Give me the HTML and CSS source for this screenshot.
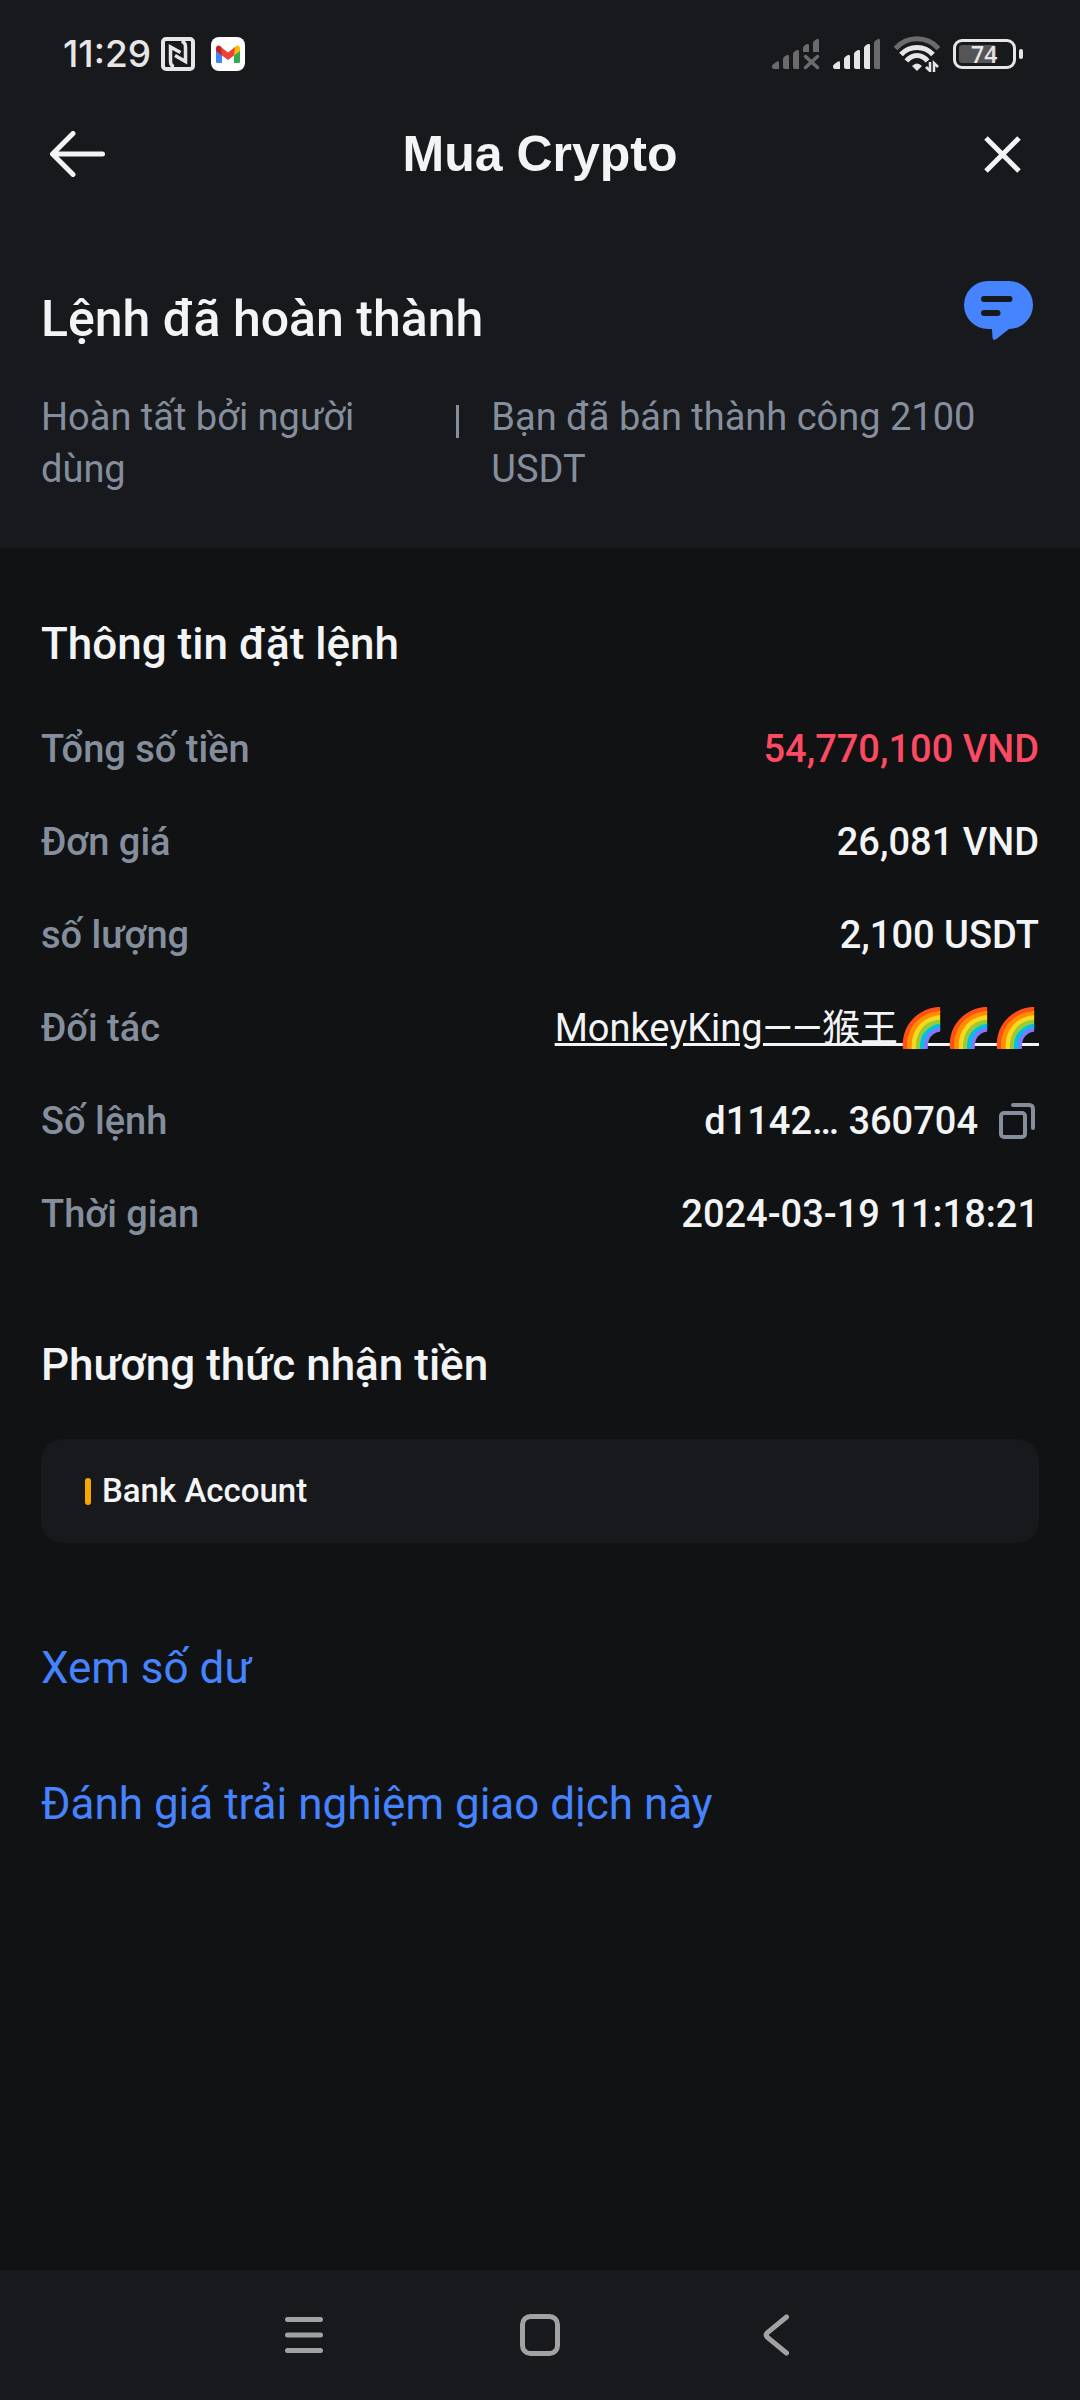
FILE: index.html
```html
<!DOCTYPE html>
<html lang="vi">
<head>
  <meta charset="UTF-8">
  <meta name="viewport" content="width=device-width, initial-scale=1">
  <title>Mua Crypto</title>
  <link rel="stylesheet" href="styles.css">
</head>
<body>

  <div class="status-bar">
    <div class="status-left">
      <span class="time">11:29</span>
      <svg class="nfc" width="34" height="34" viewBox="0 0 34 34" fill="none" stroke="#e6e6e6">
        <rect x="2" y="2" width="30" height="30" rx="3" stroke-width="4"/>
        <path d="M13 29.500C10 29 9.500 27 9.500 24V10L19.500 15.500" stroke-width="3.500"/>
        <path d="M20.500 4.500C24 5 24.500 7 24.500 10V24.500L14 18.500" stroke-width="3.500"/>
      </svg>
      <svg width="34" height="34" viewBox="0 0 34 34">
        <rect width="34" height="34" rx="8" fill="#fff"/>
        <path d="M5 12v12.500q0 1.500 1.500 1.500H11V15z" fill="#4285f4"/>
        <path d="M29 12v12.500q0 1.500-1.500 1.500H23V15z" fill="#34a853"/>
        <path d="M23 11.500l1.500-2.200C26.500 7.500 29 9 29 11.500V14l-6 4.500z" fill="#fbbc04"/>
        <path d="M11 11.500L9.500 9.300C7.500 7.500 5 9 5 11.500V14l6 4.500z" fill="#c5221f"/>
        <path d="M10 10l7 5.500L24 10l-1 8.500-6 4.500-6-4.500z" fill="#ea4335"/>
      </svg>
    </div>
    <div class="status-right">
      <svg width="48" height="32" viewBox="0 0 48 32" fill="#6b6b6d">
        <path d="M0 28q0-1.500 5-4.500q2-.8 2 1V31H2q-2 0-2-2z"/>
        <path d="M11 21q0-2 4-4q2-.5 2 1V31h-4q-2 0-2-2z"/>
        <path d="M21 16q0-2 4-4q2-.5 2 1V31h-4q-2 0-2-2z"/>
        <path d="M31 10q0-2 4-4q2-.5 2 1v7h-6z"/>
        <path d="M41 5q0-2 4-4q2-.5 2 1v12h-6z"/>
        <path d="M33.500 18.500l12 11m0-11l-12 11" fill="none" stroke="#6b6b6d" stroke-width="3.500" stroke-linecap="round"/>
      </svg>
      <svg width="48" height="32" viewBox="0 0 48 32" fill="#e6e6e6">
        <path d="M0 28q0-1.500 5-4.500q2-.8 2 1V31H2q-2 0-2-2z"/>
        <path d="M11 21q0-2 4-4q2-.5 2 1V31h-4q-2 0-2-2z"/>
        <path d="M21 16q0-2 4-4q2-.5 2 1V31h-4q-2 0-2-2z"/>
        <path d="M31 10q0-2 4-4q2-.5 2 1V31h-4q-2 0-2-2z"/>
        <path d="M41 5q0-2 4-4q2-.5 2 1V31h-4q-2 0-2-2z" fill="#6b6b6d"/>
      </svg>
      <svg width="46" height="36" viewBox="0 0 46 36" fill="none" stroke="#e6e6e6" stroke-width="5">
        <path d="M1.500 12.500C13-.5 33-.5 44.500 12.500" stroke="#6b6b6d"/>
        <path d="M7 18.500C15.500 9 30.500 9 39 18.500"/>
        <path d="M12.500 25C18 17.500 28 17.500 33.500 25"/>
        <path d="M18 30q5-5 10 0l-5 5z" fill="#e6e6e6" stroke="none"/>
        <path d="M36 26v9l-4-4M40 36v-9l4 4" stroke-width="2.500"/>
      </svg>
      <div class="battery">
        <div class="battery-body"><span class="battery-level">74</span></div>
        <div class="battery-tip"></div>
      </div>
    </div>
  </div>

  <header class="app-bar">
    <button class="icon-button" aria-label="Quay lại">
      <svg width="55" height="46" viewBox="0 0 55 46" fill="none" stroke="#f3f4f6" stroke-width="5" stroke-linecap="round" stroke-linejoin="round">
        <path d="M52.500 23H3M23 2.500L2.500 23L23 43.500"/>
      </svg>
    </button>
    <h1 class="title">Mua Crypto</h1>
    <button class="icon-button close" aria-label="Đóng">
      <svg width="37" height="37" viewBox="0 0 37 37" fill="none" stroke="#f3f4f6" stroke-width="5">
        <path d="M2 2l33 33M35 2L2 35"/>
      </svg>
    </button>
  </header>

  <section class="summary">
    <div class="summary-head">
      <h2>Lệnh đã hoàn thành</h2>
      <button class="icon-button" aria-label="Chat">
        <svg width="69" height="60" viewBox="0 0 69 60">
          <path d="M24 0H45A24 24 0 0 1 45 48L33 57.500Q28.500 61 28.500 56L28 48H24A24 24 0 0 1 24 0z" fill="#4583ff"/>
          <path d="M20 18H45.500M20 32H33.500" stroke="#18191d" stroke-width="6" stroke-linecap="round"/>
        </svg>
      </button>
    </div>
    <div class="summary-text">
      <p>Hoàn tất bởi người dùng</p>
      <span class="divider"></span>
      <p>Bạn đã bán thành công 2100 USDT</p>
    </div>
  </section>

  <main class="content">
    <h3>Thông tin đặt lệnh</h3>
    <dl class="details">
      <div class="row">
        <dt>Tổng số tiền</dt>
        <dd class="total">54,770,100 VND</dd>
      </div>
      <div class="row">
        <dt>Đơn giá</dt>
        <dd>26,081 VND</dd>
      </div>
      <div class="row">
        <dt>số lượng</dt>
        <dd>2,100 USDT</dd>
      </div>
      <div class="row">
        <dt>Đối tác</dt>
        <dd><a class="partner" href="#">MonkeyKing——猴王🌈🌈🌈</a></dd>
      </div>
      <div class="row">
        <dt>Số lệnh</dt>
        <dd class="order-id">
          d1142… 360704
          <button class="icon-button" aria-label="Sao chép">
            <svg width="40" height="36" viewBox="0 0 40 36" fill="none" stroke="#848e9c" stroke-width="4">
              <rect x="2" y="10" width="24" height="24" rx="3"/>
              <path d="M14 2H30Q34 2 34 6V25" stroke-linecap="round"/>
            </svg>
          </button>
        </dd>
      </div>
      <div class="row">
        <dt>Thời gian</dt>
        <dd>2024-03-19 11:18:21</dd>
      </div>
    </dl>

    <h3>Phương thức nhận tiền</h3>
    <div class="method">
      <span class="method-mark"></span>
      Bank Account
    </div>

    <div class="links">
      <a href="#">Xem số dư</a>
      <a href="#">Đánh giá trải nghiệm giao dịch này</a>
    </div>
  </main>

  <nav class="system-nav">
    <button aria-label="Gần đây">
      <svg width="40" height="42" viewBox="0 0 40 42" stroke="#a2a2a2" stroke-width="5" stroke-linecap="round">
        <path d="M3.500 5.500h33M3.500 21h33M3.500 36.500h33"/>
      </svg>
    </button>
    <button aria-label="Màn hình chính">
      <svg width="40" height="42" viewBox="0 0 40 42" fill="none" stroke="#a2a2a2" stroke-width="5">
        <rect x="2.500" y="2.500" width="35" height="37" rx="8"/>
      </svg>
    </button>
    <button aria-label="Trở về">
      <svg width="26" height="42" viewBox="0 0 26 42" fill="none" stroke="#a2a2a2" stroke-width="5" stroke-linecap="round">
        <path d="M23.500 3L4.500 18.500Q2 21 4.500 23.500L23.500 39"/>
      </svg>
    </button>
  </nav>

</body>
</html>
```
FILE: styles.css
```css
* {
  box-sizing: border-box;
  margin: 0;
  padding: 0;
}

body {
  display: flex;
  flex-direction: column;
  min-height: 100vh;
  background-color: #111214;
  color: #f3f4f6;
  font-family: Roboto, "Noto Sans CJK SC", sans-serif;
  font-size: 38px;
  line-height: 52px;
}

button {
  border: none;
  background: none;
  color: inherit;
  cursor: pointer;
}

svg {
  display: block;
}

.icon-button {
  flex-shrink: 0;
}

/* status bar */
.status-bar {
  display: flex;
  justify-content: space-between;
  align-items: center;
  height: 108px;
  padding: 0 57px 0 63px;
  background-color: #18191d;
  color: #e6e6e6;
}

.status-left,
.status-right {
  display: flex;
  align-items: center;
  gap: 13px;
}

.status-left {
  gap: 10px;
}

.time {
  font-family: Inter, sans-serif;
  font-size: 37px;
  font-weight: 500;
}

.nfc {
  margin-right: 6px;
}

.battery {
  display: flex;
  align-items: center;
  gap: 3px;
}

.battery-body {
  display: flex;
  width: 63px;
  height: 30px;
  padding: 3px;
  border: 3px solid #e6e6e6;
  border-radius: 9px;
}

.battery-level {
  width: 37px;
  padding-left: 12px;
  border-radius: 3px;
  background-color: #555557;
  font-family: "Open Sans", sans-serif;
  font-size: 23px;
  font-weight: 600;
  line-height: 18px;
}

.battery-tip {
  width: 4px;
  height: 10px;
  border-radius: 2px;
  background-color: #e6e6e6;
}

/* app bar */
.app-bar {
  display: grid;
  grid-template-columns: 1fr auto 1fr;
  align-items: center;
  height: 92px;
  padding: 0 50px;
  background-color: #18191d;
}

.app-bar .icon-button {
  justify-self: start;
}

.app-bar .close {
  justify-self: end;
  padding-right: 9px;
}

.title {
  font-family: "Liberation Sans", Arial, sans-serif;
  font-size: 50px;
  font-weight: 700;
}

/* order summary */
.summary {
  padding: 81px 41px 53px;
  background-color: #18191d;
}

.summary-head {
  display: flex;
  justify-content: space-between;
  align-items: flex-start;
  padding-right: 6px;
}

.summary h2 {
  padding-top: 8px;
  font-size: 50px;
  font-weight: 500;
  line-height: 60px;
}

.summary-text {
  display: grid;
  grid-template-columns: 7fr 3px 10fr;
  gap: 32px;
  margin-top: 42px;
  color: #848e9c;
}

.divider {
  height: 33px;
  margin-top: 14px;
  background-color: #848e9c;
}

/* order details */
.content {
  flex: 1;
  padding: 70px 41px;
}

h3 {
  font-size: 44px;
  font-weight: 500;
}

.details {
  display: flex;
  flex-direction: column;
  gap: 41px;
  margin: 53px 0 99px;
  font-weight: 500;
}

.row {
  display: flex;
  justify-content: space-between;
}

dt {
  color: #848e9c;
}

.total {
  color: #fc4a63;
}

.partner {
  color: inherit;
  font-weight: 400;
}

.order-id {
  display: flex;
  align-items: center;
  gap: 21px;
}

.method {
  display: flex;
  align-items: center;
  gap: 11px;
  margin-top: 48px;
  padding: 26px 44px;
  border-radius: 22px;
  background-color: #18191d;
  font-size: 33px;
  font-weight: 500;
}

.method-mark {
  width: 6px;
  height: 27px;
  border-radius: 3px;
  background-color: #f7a600;
}

.links {
  display: flex;
  flex-direction: column;
  align-items: flex-start;
  gap: 84px;
  margin-top: 99px;
  font-size: 44px;
}

.links a {
  color: #4583ff;
  text-decoration: none;
}

/* system navigation */
.system-nav {
  display: flex;
  justify-content: center;
  height: 130px;
  background-color: #18191d;
}

.system-nav button {
  display: flex;
  justify-content: center;
  align-items: center;
  width: 236px;
}
```
